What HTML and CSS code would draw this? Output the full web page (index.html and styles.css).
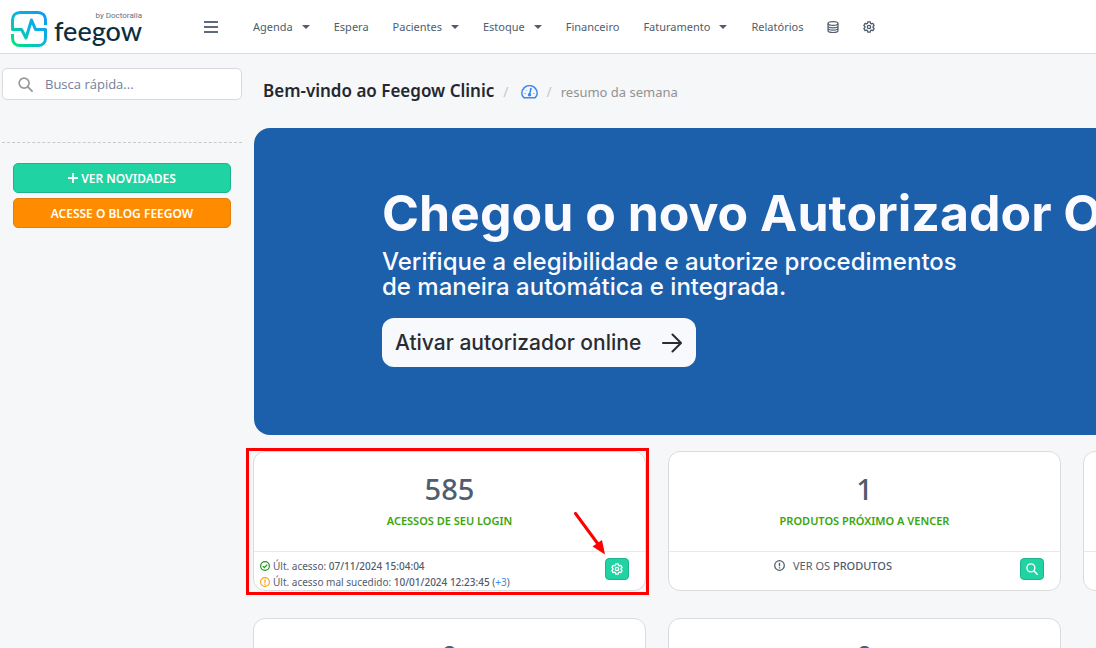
FILE: index.html
```html
<!DOCTYPE html>
<html lang="pt-BR">
<head>
<meta charset="utf-8">
<meta name="viewport" content="width=device-width, initial-scale=1">
<title>Feegow Clinic</title>
<link rel="stylesheet" href="styles.css">
</head>
<body>
<svg class="sprite" aria-hidden="true">
  <symbol id="gear" viewBox="0 0 16 16"><path d="M6.4 1.2h3.2l.5 1.9 1.2.7 1.9-.6 1.6 2.8-1.4 1.3v1.4l1.4 1.3-1.6 2.8-1.9-.6-1.2.7-.5 1.9H6.4l-.5-1.9-1.2-.7-1.9.6L1.200 10l1.400-1.300V7.300L1.200 6l1.600-2.800 1.900.6 1.200-.7z" fill="none" stroke="currentColor" stroke-width="1.800" stroke-linejoin="round"/><circle cx="8" cy="8" r="2.200" fill="none" stroke="currentColor" stroke-width="1.800"/></symbol>
  <symbol id="search" viewBox="0 0 16 16"><circle cx="6.500" cy="6.500" r="5.300" fill="none" stroke="currentColor" stroke-width="1.800"/><path d="M10.500 10.500L15 15" stroke="currentColor" stroke-width="2" stroke-linecap="round"/></symbol>
  <symbol id="alert" viewBox="0 0 16 16"><circle cx="8" cy="8" r="7" fill="none" stroke="currentColor" stroke-width="1.800"/><path d="M8 4v5M8 10.500v1.800" stroke="currentColor" stroke-width="2"/></symbol>
  <symbol id="check" viewBox="0 0 16 16"><circle cx="8" cy="8" r="7" fill="none" stroke="currentColor" stroke-width="1.900"/><path d="M4.500 8.200L7 10.700l4.600-4.800" fill="none" stroke="currentColor" stroke-width="2"/></symbol>
</svg>

<header class="topbar">
  <a class="brand" href="#" aria-label="Feegow by Doctoralia">
    <svg class="brand-mark" viewBox="0 0 36 36" aria-hidden="true">
      <defs><linearGradient id="mark" x1="0" y1="1" x2="1" y2="0"><stop offset="0" stop-color="#00e676"/><stop offset=".5" stop-color="#0bb5dc"/><stop offset="1" stop-color="#0a9bf5"/></linearGradient></defs>
      <g fill="none" stroke="url(#mark)" stroke-width="3" stroke-linejoin="round">
        <path d="M34.500 14V9c0-4.500-3-7.500-7.500-7.500H9C4.500 1.500 1.500 4.500 1.500 9v9.500h9l4.500 8.500 5.500-18 4 9.500h10V27c0 4.500-3 7.500-7.500 7.500H9c-4.500 0-7.500-3-7.500-7.500v-4"/>
      </g>
    </svg>
    <span class="brand-text"><small class="brand-by">by Doctoralia</small><span class="brand-name">feegow</span></span>
  </a>
  <button class="menu-toggle" type="button" aria-label="Menu"><span></span><span></span><span></span></button>
  <nav class="nav">
    <a class="drop" href="#">Agenda</a>
    <a href="#">Espera</a>
    <a class="drop" href="#">Pacientes</a>
    <a class="drop" href="#">Estoque</a>
    <a href="#">Financeiro</a>
    <a class="drop" href="#">Faturamento</a>
    <a href="#">Relatórios</a>
    <a href="#" aria-label="Cadastros"><svg class="nav-icon" viewBox="0 0 12 12" fill="none" stroke="currentColor" stroke-width="1.200" aria-hidden="true"><ellipse cx="6" cy="2.500" rx="5" ry="1.900"/><path d="M1 2.500v7C1 10.600 3 11.500 6 11.500s5-.9 5-2v-7M1 5c0 1 2 1.800 5 1.800S11 6 11 5M1 7.300c0 1 2 1.800 5 1.800s5-.8 5-1.800"/></svg></a>
    <a href="#" aria-label="Configurações"><svg class="nav-icon" aria-hidden="true"><use href="#gear"/></svg></a>
  </nav>
</header>

<div class="layout">
  <aside class="sidebar">
    <label class="search">
      <svg class="search-icon" aria-hidden="true"><use href="#search"/></svg>
      <input type="text" placeholder="Busca rápida..." aria-label="Busca rápida">
    </label>
    <hr class="divider">
    <div class="side-actions">
      <button class="side-btn green" type="button"><svg class="plus" viewBox="0 0 10 10" aria-hidden="true"><path d="M5 0v10M0 5h10" stroke="currentColor" stroke-width="1.800"/></svg>VER NOVIDADES</button>
      <button class="side-btn orange" type="button">ACESSE O BLOG FEEGOW</button>
    </div>
  </aside>

  <main class="main">
    <div class="crumbs">
      <h1>Bem-vindo ao Feegow Clinic</h1>
      <span class="slash">/</span>
      <a href="#" aria-label="Painel"><svg class="gauge" viewBox="0 0 17 14" fill="none" stroke="currentColor" stroke-width="1.500" stroke-linejoin="round" aria-hidden="true"><path d="M3 12.800C1.600 11.700.8 10.200.8 8.300a7.700 7.700 0 0 1 15.400 0c0 1.900-.8 3.400-2.200 4.500z"/><path d="M8.500 9.500l1.500-6" stroke-linecap="round"/><circle cx="8.500" cy="9.700" r="1"/><path d="M3.500 8.500h1M12.500 8.500h1M5 5l.5.500" stroke-width="1"/></svg></a>
      <span class="slash">/</span>
      <span class="current">resumo da semana</span>
    </div>

    <section class="banner">
      <h2>Chegou o novo Autorizador Online</h2>
      <p>Verifique a elegibilidade e autorize procedimentos<br>de maneira automática e integrada.</p>
      <button class="banner-btn" type="button">Ativar autorizador online
        <svg class="arrow-icon" viewBox="0 0 20 20" fill="none" stroke="currentColor" stroke-width="2" stroke-linecap="round" stroke-linejoin="round" aria-hidden="true"><path d="M1 10h17.500M10.500 1.500L19 10l-8.500 8.500"/></svg>
      </button>
    </section>

    <section class="cards">
      <article class="card">
        <div class="card-body"><strong class="count">585</strong><span class="title">ACESSOS DE SEU LOGIN</span></div>
        <div class="card-foot">
          <ul class="log">
            <li><svg class="ok" aria-hidden="true"><use href="#check"/></svg><span>Últ. acesso: <b>07/11/2024 15:04:04</b></span></li>
            <li><svg class="warn" aria-hidden="true"><use href="#alert"/></svg><span>Últ. acesso mal sucedido: <b>10/01/2024 12:23:45</b> (<a href="#">+3</a>)</span></li>
          </ul>
          <button class="mini" type="button" aria-label="Configurar"><svg aria-hidden="true"><use href="#gear"/></svg></button>
        </div>
        <div class="highlight" aria-hidden="true"></div>
        <svg class="pointer" viewBox="0 0 32 43" aria-hidden="true"><path d="M1.500 1.500L24 32" stroke="#f00" stroke-width="3" stroke-linecap="round"/><path d="M31 42.500L18.500 34.500 28 28z" fill="#f00"/></svg>
      </article>
      <article class="card">
        <div class="card-body"><strong class="count">1</strong><span class="title">PRODUTOS PRÓXIMO A VENCER</span></div>
        <div class="card-foot">
          <a class="see" href="#"><svg aria-hidden="true"><use href="#alert"/></svg><span>VER OS <b>PRODUTOS</b></span></a>
          <button class="mini" type="button" aria-label="Pesquisar"><svg aria-hidden="true"><use href="#search"/></svg></button>
        </div>
      </article>
      <article class="card"><div class="card-body"></div><div class="card-foot"></div></article>
      <article class="card"><div class="card-body"><strong class="count">0</strong></div><div class="card-foot"></div></article>
      <article class="card"><div class="card-body"><strong class="count">0</strong></div><div class="card-foot"></div></article>
    </section>
  </main>
</div>
</body>
</html>
```
FILE: styles.css
```css
* { box-sizing: border-box; }
html, body { height: 100%; }
body {
  margin: 0;
  display: flex;
  flex-direction: column;
  overflow: hidden;
  background: #f5f7f9;
  color: #4f5d6e;
  font-family: "Noto Sans", "Open Sans", sans-serif;
  font-size: 12px;
}
a { color: inherit; text-decoration: none; }
button { font-family: inherit; cursor: pointer; }
b { font-weight: 500; }
svg { display: block; flex: none; }
.sprite { position: absolute; width: 0; height: 0; }

.topbar {
  display: flex;
  align-items: center;
  flex: none;
  height: 54px;
  padding-left: 11px;
  background: #fff;
  border-bottom: 1px solid #d5daea;
}
.brand { display: flex; align-items: center; gap: 7px; width: 193px; padding-top: 4px; }
.brand-mark { width: 36px; height: 36px; }
.brand-text { display: flex; flex-direction: column; width: 88px; color: #0b2f40; }
.brand-by { align-self: flex-end; font: 8px/8px Roboto, sans-serif; color: #5f7080; }
.brand-name { padding-bottom: 4px; font: 500 27px/22px Lato, sans-serif; }
.menu-toggle {
  display: flex;
  flex-direction: column;
  gap: 3px;
  width: 14px;
  padding: 0;
  border: 0;
  background: none;
}
.menu-toggle span { width: 14px; height: 2px; background: #5f6b7c; }
.nav { display: flex; align-items: center; gap: 24px; margin-left: 35px; font-size: 11px; white-space: nowrap; }
.nav a { display: flex; align-items: center; gap: 9px; }
.drop::after {
  content: "";
  border: 4px solid transparent;
  border-top-color: currentColor;
  border-bottom: 0;
}
.nav-icon { width: 12px; height: 12px; }

.layout { display: flex; flex: 1; min-height: 0; }
.sidebar { flex: none; width: 242px; padding: 14px 0 0 2px; }
.search {
  display: flex;
  align-items: center;
  gap: 12px;
  height: 32px;
  padding-left: 15px;
  background: #fff;
  border: 1px solid #d8dadd;
  border-radius: 5px;
}
.search-icon { width: 15px; height: 15px; color: #999; }
.search input {
  flex: 1;
  min-width: 0;
  padding: 0;
  border: 0;
  outline: 0;
  background: none;
  font: 13px/18px "Open Sans", sans-serif;
}
.search input::placeholder { color: #72819a; opacity: 1; }
.divider { margin: 42px 0 20px; border: 0; border-top: 1px dashed #c8cacd; }
.side-actions { display: flex; flex-direction: column; gap: 5px; padding: 0 11px; }
.side-btn {
  display: flex;
  align-items: center;
  justify-content: center;
  gap: 3px;
  height: 30px;
  border: 1px solid;
  border-radius: 5px;
  color: #fff;
  font-size: 12px;
  font-weight: 600;
}
.plus { width: 10px; height: 10px; }
.green { background: #20d3a2; border-color: #1fb58c; }
.orange { background: #ff8c00; border-color: #e07f0c; }

.main { flex: 1; min-width: 0; padding-left: 11px; overflow: hidden; }
.crumbs { display: flex; align-items: baseline; gap: 9px; height: 74px; padding: 24px 0 0 10px; white-space: nowrap; }
.crumbs h1 { margin: 0; font-size: 17px; line-height: 26px; font-weight: 600; color: #25272e; }
.crumbs a { color: #4285f4; margin: 0 0 0 3px; }
.slash { font-size: 14px; color: #c5c8cc; }
.gauge { width: 17px; height: 14px; transform: translateY(2px); }
.current { font-size: 13px; color: #929292; }

.banner {
  height: 307px;
  margin-left: 1px;
  padding: 54px 0 0 128px;
  overflow: hidden;
  border-radius: 16px 0 0 16px;
  background: #1c5fab;
  color: #fbfbff;
  font-family: Inter, sans-serif;
  white-space: nowrap;
}
.banner h2 { margin: 0; font-size: 50px; line-height: 62px; font-weight: 700; }
.banner p { margin: 5px 0 19px; font-size: 24px; line-height: 25px; font-weight: 500; }
.banner-btn {
  display: flex;
  align-items: center;
  gap: 21px;
  height: 49px;
  padding: 0 14px 0 13px;
  border: 0;
  border-radius: 12px;
  background: #f8f9fc;
  color: #292c33;
  font-size: 21px;
  font-weight: 500;
}
.arrow-icon { width: 20px; height: 20px; }

.cards { display: grid; grid-template-columns: repeat(3, 393px); gap: 27px 22px; margin-top: 16px; }
.card {
  position: relative;
  display: flex;
  flex-direction: column;
  min-height: 140px;
  background: #fff;
  border: 1px solid #dadcdc;
  border-radius: 12px;
}
.card-body { display: flex; flex-direction: column; align-items: center; height: 99px; padding-top: 18px; }
.count { font-size: 29px; line-height: 38px; font-weight: 500; }
.title { margin-top: 5px; font-size: 11px; line-height: 16px; font-weight: 600; color: #3aa60c; }
.card-foot {
  display: flex;
  justify-content: space-between;
  flex: 1;
  padding: 6px 16px 0 6px;
  border-top: 1px solid #e9eaeb;
}
.log { margin: 0; padding: 0; list-style: none; font-size: 10px; line-height: 16px; }
.log li { display: flex; align-items: center; gap: 3px; }
.log svg { width: 10px; height: 10px; }
.log a { color: #4285f4; }
.ok { color: #1a961a; }
.warn { color: #ff9d0a; }
.mini {
  display: grid;
  place-items: center;
  width: 24px;
  height: 22px;
  padding: 0;
  border: 1px solid #1fb58c;
  border-radius: 4px;
  background: #20d3a2;
  color: #fff;
}
.mini svg { width: 12px; height: 12px; }
.see { display: flex; gap: 8px; margin-left: 99px; height: 15px; align-items: center; font-size: 11px; }
.see svg { width: 11px; height: 11px; }
.highlight { position: absolute; inset: -4px -4px -5px -8px; border: 3px solid #f00; }
.pointer { position: absolute; left: 320px; top: 60px; width: 32px; height: 43px; }
```
